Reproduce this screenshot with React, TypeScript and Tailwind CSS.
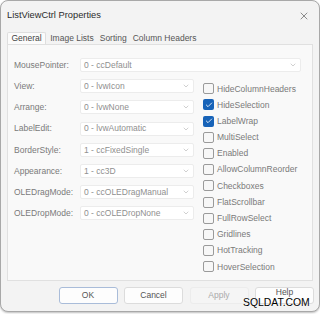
import { X, ChevronDown, Check } from "lucide-react";

const fields = [
  { label: "View:", value: "0 - lvwIcon" },
  { label: "Arrange:", value: "0 - lvwNone" },
  { label: "LabelEdit:", value: "0 - lvwAutomatic" },
  { label: "BorderStyle:", value: "1 - ccFixedSingle" },
  { label: "Appearance:", value: "1 - cc3D" },
  { label: "OLEDragMode:", value: "0 - ccOLEDragManual" },
  { label: "OLEDropMode:", value: "0 - ccOLEDropNone" },
];

const flags = [
  { label: "HideColumnHeaders", on: false },
  { label: "HideSelection", on: true },
  { label: "LabelWrap", on: true },
  { label: "MultiSelect", on: false },
  { label: "Enabled", on: false },
  { label: "AllowColumnReorder", on: false },
  { label: "Checkboxes", on: false },
  { label: "FlatScrollbar", on: false },
  { label: "FullRowSelect", on: false },
  { label: "Gridlines", on: false },
  { label: "HotTracking", on: false },
  { label: "HoverSelection", on: false },
];

function Combo({ value, wide }: { value: string; wide?: boolean }) {
  return (
    <div
      className={`h-[14px] flex items-center justify-between bg-white border border-[#ececec] rounded-[2px] pl-[3px] pr-[3px] text-[#8f8f8f] ${
        wide ? "flex-1" : "w-[114px]"
      }`}
    >
      <span>{value}</span>
      <ChevronDown className="h-[8px] w-[8px] text-[#a0a0a0]" strokeWidth={1.5} />
    </div>
  );
}

function Flag({ label, on }: { label: string; on: boolean }) {
  return (
    <div className="h-[16.2px] flex items-center gap-[3px]">
      {on ? (
        <div className="h-[11px] w-[11px] rounded-[2px] bg-[#1763b8] flex items-center justify-center">
          <Check className="h-[8px] w-[8px] text-white" strokeWidth={2.5} />
        </div>
      ) : (
        <div className="h-[11px] w-[11px] rounded-[2px] border border-[#9a9a9a] bg-[#f7f7f7]" />
      )}
      <span className="text-[#7a7a7a]">{label}</span>
    </div>
  );
}

export default function App() {
  return (
    <div
      className="relative w-[320px] h-[314px] bg-white text-[8.5px] leading-none"
      style={{ fontFamily: '"Liberation Sans", Arial, sans-serif' }}
    >
      <div className="h-[312px] flex flex-col bg-[#f3f3f3] border border-[#a8a8a8] rounded-[8px] shadow-[0_1px_2px_rgba(0,0,0,0.25)]">
        {/* title bar */}
        <div className="h-[29px] flex items-center justify-between pl-[6px] pr-[9px]">
          <span className="text-[9.3px] text-[#2b2b2b]">ListViewCtrl Properties</span>
          <X className="h-[12px] w-[12px] text-[#333]" strokeWidth={1.1} />
        </div>

        {/* tabs */}
        <div className="flex items-end pl-[6px] h-[14px] text-[#555]">
          <div className="h-[12px] px-[3.5px] flex items-center bg-[#fbfbfb] border border-b-0 border-[#dedede] rounded-t-[2px] text-[#444]">
            General
          </div>
          <div className="h-[12px] flex items-center pl-[4px] pr-[3px]">Image Lists</div>
          <div className="h-[12px] flex items-center px-[3px]">Sorting</div>
          <div className="h-[12px] flex items-center px-[3px]">Column Headers</div>
        </div>

        {/* panel */}
        <div className="mx-[6px] h-[237px] bg-[#f9f9f9] border border-[#e0e0e0] pt-[9.5px] pl-[6px] pr-[11px]">
          <div className="h-[21.2px] flex items-center">
            <span className="w-[66px] text-[#7a7a7a]">MousePointer:</span>
            <Combo value="0 - ccDefault" wide />
          </div>
          <div className="flex">
            <div className="flex flex-col">
              {fields.map((f) => (
                <div key={f.label} className="h-[21.2px] flex items-center">
                  <span className="w-[66px] text-[#7a7a7a]">{f.label}</span>
                  <Combo value={f.value} />
                </div>
              ))}
            </div>
            <div className="ml-[9px] mt-[5px] flex flex-col">
              {flags.map((f) => (
                <Flag key={f.label} label={f.label} on={f.on} />
              ))}
            </div>
          </div>
        </div>

        {/* buttons */}
        <div className="flex justify-end gap-[6.5px] pr-[5px] pt-[6px]">
          <button className="w-[59px] h-[17px] bg-[#fdfdfd] border border-[#a9bcd9] rounded-[3px] text-[#555]">
            OK
          </button>
          <button className="w-[59px] h-[17px] bg-[#fdfdfd] border border-[#dcdcdc] rounded-[3px] text-[#555]">
            Cancel
          </button>
          <button className="w-[59px] h-[17px] bg-[#f5f5f5] border border-[#ececec] rounded-[3px] text-[#aaa]">
            Apply
          </button>
          <button className="w-[59px] h-[17px] bg-[#fdfdfd] border border-[#dcdcdc] rounded-[3px] text-[#555]">
            <span className="relative top-[-3px]">Help</span>
          </button>
        </div>
      </div>

      <span className="absolute left-[243px] top-[298px] text-[10.4px] text-black [text-shadow:0_0_2px_#fff]">
        SQLDAT.COM
      </span>
    </div>
  );
}
